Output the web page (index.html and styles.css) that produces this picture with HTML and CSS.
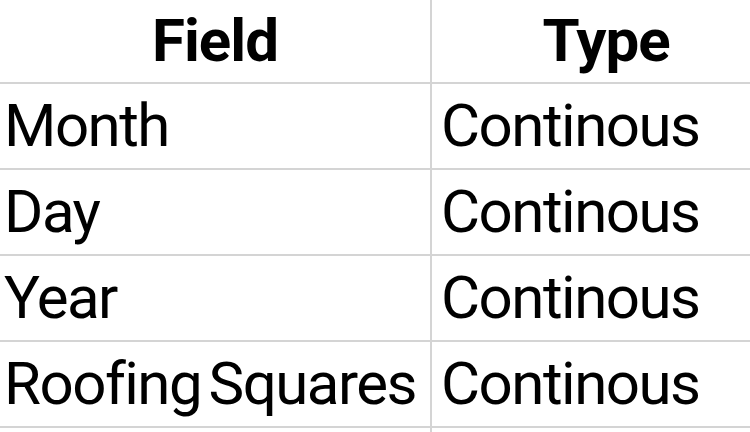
FILE: index.html
```html
<!DOCTYPE html>
<html>
<head>
<meta charset="utf-8">
<link rel="stylesheet" href="styles.css">
</head>
<body>
<div class="sheet">
  <div class="cell head">Field</div>
  <div class="cell head">Type</div>
  <div class="cell">Month</div>
  <div class="cell alt">Continous</div>
  <div class="cell">Day</div>
  <div class="cell alt">Continous</div>
  <div class="cell">Year</div>
  <div class="cell alt">Continous</div>
  <div class="cell">Roofing Squares</div>
  <div class="cell alt">Continous</div>
  <div class="cell"></div>
  <div class="cell"></div>
</div>
</body>
</html>
```
FILE: styles.css
```css
html, body {
  margin: 0;
  padding: 0;
  background: #ffffff;
  overflow: hidden;
  width: 750px;
  height: 432px;
}
.sheet {
  display: grid;
  grid-template-columns: 430px 348px;
  grid-template-rows: 82px repeat(5, 84px);
  gap: 2px;
  background: #d4d4d4;
  width: 780px;
  height: 432px;
  overflow: hidden;
  font-family: Roboto, "Liberation Sans", sans-serif;
  color: #000;
}
.cell {
  background: #fff;
  font-size: 60px;
  line-height: 84px;
  padding-left: 4px;
  letter-spacing: -1.5px;
  word-spacing: -6px;
  white-space: nowrap;
  overflow: hidden;
}
.cell.alt {
  padding-left: 9px;
}
.cell.head {
  font-weight: 700;
  text-align: center;
  padding-left: 0;
  letter-spacing: -1px;
  line-height: 82px;
}
```
